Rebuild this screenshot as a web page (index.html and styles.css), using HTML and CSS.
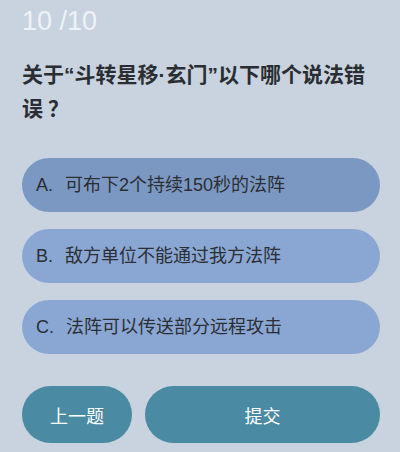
FILE: index.html
```html
<!DOCTYPE html>
<html lang="zh-CN">
<head>
    <meta charset="UTF-8">
    <meta name="viewport" content="width=device-width, initial-scale=1.0">
    <title>答题</title>
    <link rel="stylesheet" href="styles.css">
</head>
<body>
    <div class="quiz">
        <div class="counter">10 /10</div>
        <h1 class="question">关于“斗转星移·玄门”以下哪个说法错误<span class="qmark">？</span></h1>
        <div class="options">
            <div class="option selected"><span class="letter">A.</span>可布下2个持续150秒的法阵</div>
            <div class="option"><span class="letter">B.</span>敌方单位不能通过我方法阵</div>
            <div class="option"><span class="letter">C.</span>法阵可以传送部分远程攻击</div>
        </div>
        <div class="actions">
            <div class="btn prev">上一题</div>
            <div class="btn submit">提交</div>
        </div>
    </div>
</body>
</html>
```

FILE: styles.css
```css
body { margin: 0; padding: 0; background: #c8d3df; font-family: "Liberation Sans", "Noto Sans CJK SC", sans-serif; width: 400px; height: 452px; overflow: hidden; }
.quiz { padding: 6px 20px 0 22px; }
.counter { font-size: 27px; line-height: 30px; color: #eef2f7; font-weight: 300; }
.question { margin: 22px 0 0; font-size: 21px; line-height: 34px; font-weight: bold; color: #2a2d31; }
.question .qmark { margin-left: 5px; }
.options { margin-top: 32px; display: flex; flex-direction: column; gap: 17px; }
.option { height: 54px; line-height: 54px; border-radius: 27px; background: #8aa7d4; color: #2b2e33; font-size: 18px; padding-left: 14px; white-space: nowrap; }
.option.selected { background: #7b98c2; }
.option .letter { margin-right: 12px; }
.actions { margin-top: 32px; display: flex; gap: 13px; }
.btn { height: 57px; border-radius: 29px; background: #4a8aa2; color: #fff; font-size: 18px; display: flex; align-items: center; justify-content: center; }
.btn.prev { width: 110px; }
.btn.submit { flex: 1; }
```
